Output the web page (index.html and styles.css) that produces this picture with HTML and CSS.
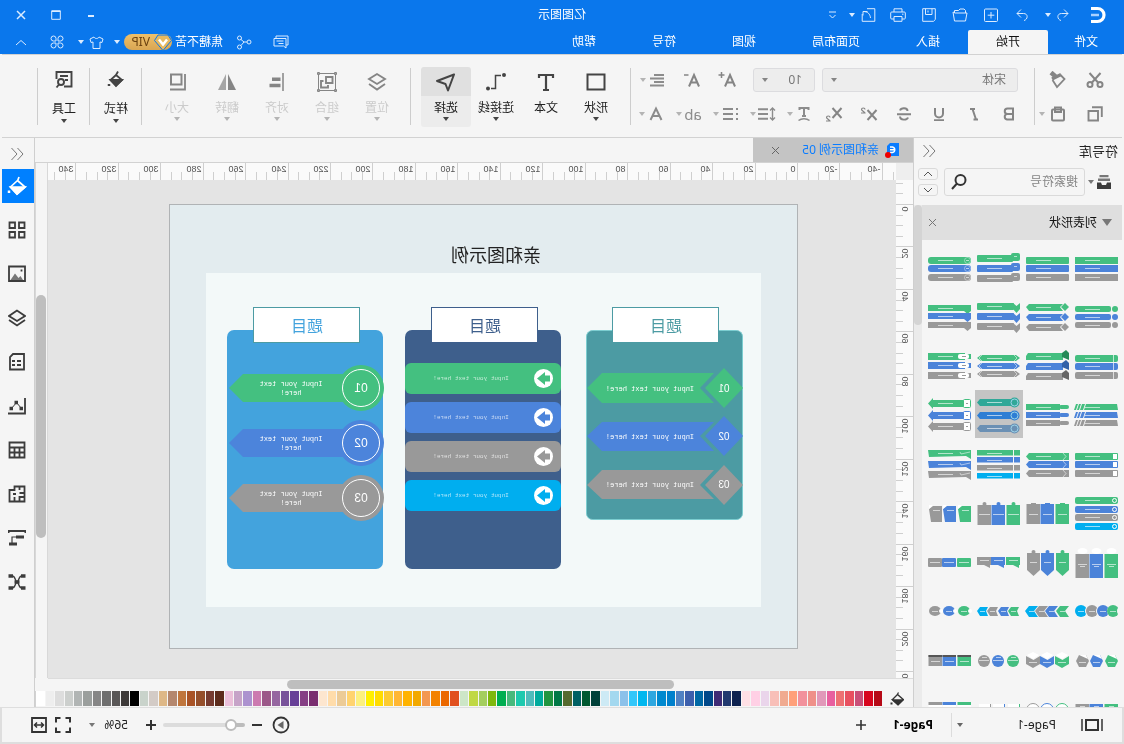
FILE: index.html
```html
<!DOCTYPE html>
<html lang="zh-CN">
<head>
<meta charset="utf-8">
<title>亿图图示</title>
<link rel="stylesheet" href="styles.css">
</head>
<body>
<div class="window">
  <header class="titlebar">
    <div class="title-row">
      <div class="quick">
        <svg class="logo" width="18" height="18" viewBox="0 0 18 18"><path d="M16 2.500H9.500a6.500 6.500 0 0 0 0 13H16" fill="none" stroke="#fff" stroke-width="3.200"/><path d="M8 9h8" stroke="#a9d0ff" stroke-width="2.500"/></svg>
        <button class="ic undo" aria-label="撤销"><svg width="14" height="14" viewBox="0 0 14 14"><path d="M6 1.500L2 5.500l4 4M2 5.500h6.500c5 0 4.500 6 .5 7"/></svg></button>
        <button class="ic drop" aria-label="撤销列表"><i class="caret"></i></button>
        <button class="ic q redo" aria-label="重做"><svg width="14" height="14" viewBox="0 0 14 14"><path d="M8 1.500l4 4-4 4M12 5.500H5.500c-5 0-4.500 6-.5 7"/></svg></button>
        <button class="ic q" aria-label="新建"><svg width="14" height="14" viewBox="0 0 14 14"><rect x=".5" y="1" width="13" height="12.500" rx="1"/><path d="M7 4v6.500M3.700 7.200h6.600"/></svg></button>
        <button class="ic q" aria-label="打开"><svg width="16" height="14" viewBox="0 0 16 14"><path d="M2.500 5V2.500L4 1h4l1.500 1.500h4V5M1 5h12l2-1-1.500 9H2.500z"/></svg></button>
        <button class="ic q" aria-label="保存"><svg width="14" height="14" viewBox="0 0 14 14"><path d="M.7.700h12.600v12.600H2.500L.7 11.500z"/><path d="M4 .700v5.800h6.500V.700M8 2.500v2"/></svg></button>
        <button class="ic q" aria-label="打印"><svg width="16" height="14" viewBox="0 0 16 14"><path d="M4 4V.800h8V4M4 11H1.500A1 1 0 0 1 .7 10V5a1 1 0 0 1 1-1h12.600a1 1 0 0 1 1 1v5a1 1 0 0 1-1 1H12M4 8.500h8v4.800H4zM2.500 6.200h1.500"/></svg></button>
        <button class="ic export" aria-label="导出"><svg width="15" height="14" viewBox="0 0 15 14"><path d="M9 .700H1.200v12.600h12.600V6M5.500 10C6 6 8 3.500 13 3.500M8.500 3.500h4.500v4"/></svg></button>
        <button class="ic drop" aria-label="导出列表"><i class="caret"></i></button>
        <button class="ic custom" aria-label="自定义"><svg width="10" height="10" viewBox="0 0 10 10"><path d="M1 2h7M1.500 5l3 3 3-3"/></svg></button>
      </div>
      <h1 class="app-title">亿图图示</h1>
      <div class="win-buttons">
        <button class="ic" aria-label="最小化"><svg width="10" height="10" viewBox="0 0 10 10"><path d="M2 6h6" stroke-width="2"/></svg></button>
        <button class="ic" aria-label="最大化"><svg width="10" height="10" viewBox="0 0 10 10"><path d="M.7.700h8.600v8.600H.7zM.7 1.500h8.600"/></svg></button>
        <button class="ic" aria-label="关闭"><svg width="10" height="10" viewBox="0 0 10 10"><path d="M1 1l8 8M9 1L1 9" stroke-width="1.500"/></svg></button>
      </div>
    </div>
    <div class="tab-row">
      <nav class="tabs">
        <button class="tab file">文件</button><button class="tab active">开始</button><button class="tab">插入</button><button class="tab">页面布局</button><button class="tab">视图</button><button class="tab">符号</button><button class="tab">帮助</button>
      </nav>
      <div class="account">
        <button class="ic chat" aria-label="消息"><svg width="16" height="14" viewBox="0 0 16 14"><path d="M1 1h12v2M1 1v9M3 3.500h12V11H5.500L3 13zM5.500 6h7M5.500 8.500h5M1 10h2"/></svg></button>
        <button class="ic share" aria-label="分享"><svg width="16" height="15" viewBox="0 0 16 15"><circle cx="3" cy="7" r="2"/><circle cx="12.500" cy="3" r="2"/><circle cx="12.500" cy="12" r="2"/><path d="M5 7h3l3-2.500M8 7l3 3.500"/></svg></button>
        <span class="user">焦糖不苦</span>
        <span class="vip"><svg width="18" height="17" viewBox="0 0 18 17"><path d="M4 1h10l3.500 5.500L9 16.500.5 6.500z" fill="#e8b95e" stroke="#0b77ea" stroke-width="1"/><path d="M5 5.500l4 5 4-5" fill="none" stroke="#fff" stroke-width="2.500"/></svg><b>VIP</b></span>
        <button class="ic drop vip-drop" aria-label="账户"><i class="caret"></i></button>
        <button class="ic shirt" aria-label="主题"><svg width="15" height="13" viewBox="0 0 15 13"><path d="M5 1L1 3l1 3.500 2-.5v6.500h7V6l2 .5L14 3l-4-2c-1 2-4 2-5 0z"/></svg></button>
        <button class="ic drop" aria-label="主题列表"><i class="caret"></i></button>
        <button class="ic apps" aria-label="应用"><svg width="14" height="14" viewBox="0 0 14 14"><path d="M6 6H3.300A2.500 2.500 0 1 1 6 3.300zM8 6h2.700A2.500 2.500 0 1 0 8 3.300zM6 8H3.300A2.500 2.500 0 1 0 6 10.700zM8 8h2.700A2.500 2.500 0 1 1 8 10.700z"/></svg></button>
        <button class="ic fold" aria-label="收起"><svg width="12" height="7" viewBox="0 0 12 7"><path d="M1 6l5-4.500L11 6"/></svg></button>
      </div>
    </div>
  </header>

  <section class="ribbon">
    <div class="clip">
      <button class="ic" aria-label="剪切"><svg width="18" height="18" viewBox="0 0 18 18" stroke-width="2"><circle cx="4" cy="13.500" r="2.500"/><circle cx="14" cy="13.500" r="2.500"/><path d="M3.500 2l8.500 9.500M14.500 2L6 11.500"/></svg></button>
      <button class="ic" aria-label="格式刷"><svg width="18" height="18" viewBox="0 0 18 18" stroke-width="1.800"><path d="M5.500 4L1.500 8l7.500 8 4.500-7"/><path d="M5 3.500l9 4.500" stroke-width="3.200"/><path d="M10.500 5.500l4.500-4" stroke-width="4.500"/></svg></button>
      <button class="ic" aria-label="复制"><svg width="16" height="16" viewBox="0 0 16 16" stroke-width="1.900"><path d="M5 5h9.500v9.500H5z"/><path d="M1.200 11V1.200H11" transform="translate(0 0)"/></svg></button>
      <button class="ic paste" aria-label="粘贴"><svg width="16" height="16" viewBox="0 0 16 16" stroke-width="2"><rect x="2" y="3.500" width="12" height="11" rx="1"/><rect x="5" y="1.500" width="6" height="4.500"/></svg><i class="caret pale"></i></button>
    </div>
    <span class="sep"></span>
    <div class="font-tools">
      <div class="tool-row first">
        <label class="pick"><select class="family" aria-label="字体"><option>宋体</option></select><i class="caret"></i></label>
        <label class="pick"><select class="size" aria-label="字号"><option>10</option></select><i class="caret"></i></label>
        <button class="ic plain grow" aria-label="增大字号"><svg width="18" height="18" viewBox="0 0 18 18" stroke-width="2"><path d="M1 15.500L6 4l5 11.500M3 11.500h6"/><path d="M14.500 1v6M11.500 4h6" stroke-width="1.500"/></svg></button>
        <button class="ic plain" aria-label="减小字号"><svg width="18" height="18" viewBox="0 0 18 18" stroke-width="2"><path d="M2 15.500L7 4l5 11.500M4 11.500h6"/><path d="M12.500 4H17" stroke-width="1.500"/></svg></button>
        <button class="ic combo align" aria-label="对齐方式"><svg width="16" height="14" viewBox="0 0 16 14" stroke-width="2"><path d="M1 2h10M1 5.500h14M1 9h10M1 12.500h14"/></svg><i class="caret pale"></i></button>
      </div>
      <div class="tool-row">
        <button class="ic plain" aria-label="加粗"><svg width="14" height="14" viewBox="0 0 14 14" stroke-width="2"><path d="M3 1.500h5.500a2.700 2.700 0 0 1 0 5.500H3zM3 7h6a2.800 2.800 0 0 1 0 5.500H3z"/></svg></button>
        <button class="ic plain" aria-label="斜体"><svg width="14" height="14" viewBox="0 0 14 14" stroke-width="2"><path d="M6 2h5M3 12.500h4.500M8.500 2L5 12.500"/></svg></button>
        <button class="ic plain" aria-label="下划线"><svg width="14" height="14" viewBox="0 0 14 14" stroke-width="2"><path d="M3 1v5.500a4 4 0 0 0 8 0V1M2 13.200h10"/></svg></button>
        <button class="ic plain" aria-label="删除线"><svg width="16" height="14" viewBox="0 0 16 14" stroke-width="1.900"><path d="M12 3.500C11 .5 4.500.500 4.500 4M4 10.500c1 3 8 3 8-1M1 7.200h14"/></svg></button>
        <button class="ic plain" aria-label="上标"><svg width="18" height="16" viewBox="0 0 18 16" stroke-width="2"><path d="M1.500 4l9 10M10.500 4l-9 10"/><path d="M13 3.500c0-2 3.500-2 3.500 0 0 1-3.500 3-3.500 3.500h4" stroke-width="1.200"/></svg></button>
        <button class="ic plain" aria-label="下标"><svg width="18" height="16" viewBox="0 0 18 16" stroke-width="2"><path d="M1.500 2l9 10M10.500 2l-9 10"/><path d="M13 11.500c0-2 3.500-2 3.500 0 0 1-3.500 3-3.500 3.500h4" stroke-width="1.200"/></svg></button>
        <button class="ic combo" aria-label="文字效果"><svg width="16" height="16" viewBox="0 0 16 16" stroke-width="2"><path d="M3.500 4V2h9v2M8 2v8M6 10h4"/><path d="M2.500 14.500c3-2.500 8-2.500 11 0" stroke-width="1.500"/></svg><i class="caret pale"></i></button>
        <button class="ic combo" aria-label="行距"><svg width="18" height="16" viewBox="0 0 18 16"><path d="M3.500 2v12M1 4.500L3.500 2 6 4.500M1 11.500L3.500 14 6 11.500" stroke-width="1.400"/><path d="M8 3.200h10M8 8h10M8 12.800h10" stroke-width="2"/></svg><i class="caret pale"></i></button>
        <button class="ic combo" aria-label="项目符号"><svg width="16" height="14" viewBox="0 0 16 14" stroke-width="2"><path d="M0 2h2M0 7h2M0 12h2M5 2h10M5 7h10M5 12h10"/></svg><i class="caret pale"></i></button>
        <button class="ic combo" aria-label="突出显示"><span class="ab">ab</span><i class="caret pale"></i></button>
        <button class="ic combo" aria-label="字体颜色"><svg width="16" height="16" viewBox="0 0 16 16" stroke-width="2"><path d="M2.500 14L8 2.500 13.500 14M4.500 10h7"/></svg><i class="caret pale"></i></button>
      </div>
    </div>
    <span class="sep"></span>
    <div class="bigs draw">
      <button class="big"><svg width="20" height="20" viewBox="0 0 20 20" stroke-width="2"><path d="M1.500 2.500h17v15h-17z"/></svg><span>形状</span><i class="caret"></i></button>
      <button class="big"><svg width="20" height="20" viewBox="0 0 20 20" stroke-width="2.200"><path d="M3 6V3h14v3M10 3v15M7 18h6"/></svg><span>文本</span></button>
      <button class="big"><svg width="20" height="20" viewBox="0 0 20 20" stroke-width="2"><path d="M5 3.500h5.500v13H15" stroke-width="1.500"/><circle cx="2" cy="3" r="1"/><circle cx="18" cy="16.500" r="1"/></svg><span>连接线</span><i class="caret"></i></button>
      <button class="big on"><svg width="20" height="20" viewBox="0 0 20 20" stroke-width="2"><path d="M2 2.500l17 6.500-8.500 3L8 18.500z" stroke-linejoin="round"/></svg><span>选择</span><i class="caret"></i></button>
    </div>
    <span class="sep"></span>
    <div class="bigs arrange">
      <button class="big off"><svg width="20" height="20" viewBox="0 0 20 20" stroke-width="1.900"><path d="M10 2l8 5-8 5-8-5zM2 12l8 5.500 8-5.500"/></svg><span>位置</span><i class="caret pale"></i></button>
      <button class="big off"><svg width="20" height="20" viewBox="0 0 20 20" stroke-width="1.900"><path d="M1.500 1.500h17v17h-17z" stroke-width="1"/><path d="M4.500 5h6.500v6H4.500zM13.500 9H16v6.500H9V13"/><path d="M.5.500h2v2h-2zM17.500.500h2v2h-2zM.5 17.500h2v2h-2zM17.500 17.500h2v2h-2z" stroke-width="1"/></svg><span>组合</span><i class="caret pale"></i></button>
      <button class="big off"><svg width="20" height="20" viewBox="0 0 20 20"><path d="M4 1v18" stroke-width="1.500"/><path d="M6.500 7.200H15M6.500 13.500h11" stroke-width="3.600"/></svg><span>对齐</span><i class="caret pale"></i></button>
      <button class="big off"><svg width="20" height="20" viewBox="0 0 20 20"><path d="M9 2v16H1z" fill="#858585" stroke="none"/><path d="M11 2v16h8z" fill="#a5a5a5" stroke="none"/></svg><span>翻转</span><i class="caret pale"></i></button>
      <button class="big off"><svg width="20" height="20" viewBox="0 0 20 20" stroke-width="2"><path d="M5.500 2.500h10.500v10H5.500z"/><path d="M2 2v15.500h15" stroke-width="1.800"/></svg><span>大小</span><i class="caret pale"></i></button>
    </div>
    <span class="sep"></span>
    <div class="bigs single">
      <button class="big"><svg width="20" height="20" viewBox="0 0 20 20" stroke-width="1.800"><path d="M8 1.500l2 3.500M10 5l5.500 5L10 15.500 4 10z"/><path d="M4 10h11.500L10 16z" fill="currentColor"/><path d="M17 14v2" stroke-width="2.500"/></svg><span>样式</span><i class="caret"></i></button>
    </div>
    <span class="sep"></span>
    <div class="bigs single">
      <button class="big"><svg width="20" height="20" viewBox="0 0 20 20" stroke-width="1.900"><path d="M10 16.500H2.500V2h15v7M6 6h8M6 10h3"/><circle cx="13" cy="12" r="3"/><path d="M15 14.500l2.500 3"/></svg><span>工具</span><i class="caret"></i></button>
    </div>
    <span class="sep"></span>
  </section>

  <main class="workspace">
    <aside class="library">
      <div class="lib-head"><h2>符号库</h2><button class="ic" aria-label="收起符号库"><svg width="14" height="14" viewBox="0 0 14 14"><path d="M6.500 1L1 7l5.500 6M12.500 1L7 7l5.500 6"/></svg></button></div>
      <div class="lib-search">
        <button class="ic lib-menu" aria-label="库"><svg width="14" height="14" viewBox="0 0 14 14"><path d="M2.500 0h9v2.200h-9zM1 3.500h12v2.500H1z" fill="#777" stroke="none"/><path d="M0 7.500h4l1 2.500h4l1-2.500h4V14H0z" fill="#3c3c3c" stroke="none"/></svg><i class="caret"></i></button>
        <div class="search-box"><input type="search" placeholder="搜索符号" aria-label="搜索符号"><button class="ic" aria-label="搜索"><svg width="16" height="16" viewBox="0 0 16 16" stroke-width="2"><circle cx="6.500" cy="6" r="5"/><path d="M10 9.500l5 5.500"/></svg></button></div>
        <div class="steps"><button aria-label="上一个"><svg width="10" height="6" viewBox="0 0 10 6"><path d="M1 5l4-4 4 4"/></svg></button><button aria-label="下一个"><svg width="10" height="6" viewBox="0 0 10 6"><path d="M1 1l4 4 4-4"/></svg></button></div>
      </div>
      <div class="lib-body">
        <div class="lib-list">
          <div class="section-head"><i class="tri"></i><h3>列表形状</h3><button class="ic" aria-label="关闭"><svg width="9" height="9" viewBox="0 0 9 9"><path d="M1 1l7 7M8 1L1 8"/></svg></button></div>
          <div class="thumbs" id="thumbs"></div>
        </div>
        <div class="lib-scroll"><i></i></div>
      </div>
    </aside>

    <section class="editor">
      <div class="doc-tabs"><div class="doc-tab"><svg width="16" height="16" viewBox="0 0 16 16"><path d="M2 1h9l3 3v10H2z" fill="#0a7cff"/><path d="M11 5H8.500a2.800 2.800 0 0 0 0 5.500H11M7 7.800h4" fill="none" stroke="#fff" stroke-width="1.400"/><circle cx="13" cy="13" r="3" fill="#f00000"/></svg><span>亲和图示例 05</span><button class="ic" aria-label="关闭文档"><svg width="9" height="9" viewBox="0 0 9 9"><path d="M1 1l7 7M8 1L1 8"/></svg></button></div></div>
      <div class="stage">
        <div class="corner"></div>
        <svg class="hruler" id="hruler"></svg>
        <div class="vscroll"><i></i></div>
        <svg class="vruler" id="vruler"></svg>
        <div class="canvas">
          <svg class="page" width="629" height="445" viewBox="0 0 629 445">
            <rect x=".5" y=".5" width="628" height="444" fill="#e3ecef" stroke="#b0b3b5"/>
            <rect x="37" y="69" width="555" height="334" fill="#f3f9f9"/>
            <text x="302" y="58" class="doc-title">亲和图示例</text>

            <rect x="55.500" y="126.500" width="156" height="189" rx="6" fill="#4c9ba3" stroke="#7ccdd0"/>
            <rect x="79.500" y="103.500" width="106" height="35" fill="#fff" stroke="#4c9ba3"/>
            <text x="132" y="128" class="card-title" fill="#4c9ba3">题目</text>
            <g fill="#44c080"><path d="M55 184l19-20 19 20-19 20z"/><path d="M84 169h112l15 15-15 15H84l14-15z"/></g>
            <g fill="#4c84db"><path d="M55 232l19-20 19 20-19 20z"/><path d="M84 218h112l15 14-15 15H84l14-15z"/></g>
            <g fill="#999"><path d="M55 281l19-20 19 20-19 20z"/><path d="M84 266h112l15 15-15 14H84l14-14z"/></g>
            <g class="num small"><text x="74" y="188">01</text><text x="74" y="236">02</text><text x="74" y="284">03</text></g>
            <g class="note"><text x="148" y="187">Input your text here!</text><text x="148" y="235">Input your text here!</text><text x="148" y="283">Input your text here!</text></g>

            <rect x="237" y="126" width="156" height="239" rx="7" fill="#3e5f8c"/>
            <rect x="260.500" y="103.500" width="106" height="35" fill="#fff" stroke="#3e5f8c"/>
            <text x="313" y="128" class="card-title" fill="#3e5f8c">题目</text>
            <rect x="237" y="159" width="156" height="31" rx="6" fill="#44c080"/>
            <rect x="237" y="198" width="156" height="31" rx="6" fill="#4c84db"/>
            <rect x="237" y="237" width="156" height="31" rx="6" fill="#999"/>
            <rect x="237" y="276" width="156" height="31" rx="6" fill="#00aeef"/>
            <g fill="#fff"><circle cx="254.500" cy="174.500" r="9.500"/><circle cx="254.500" cy="213.500" r="9.500"/><circle cx="254.500" cy="252.500" r="9.500"/><circle cx="254.500" cy="291.500" r="9.500"/></g>
            <path d="M248 171.500h5v-3.500l8 6.500-8 6.500v-3.500h-5z" fill="#44c080"/>
            <path d="M248 210.500h5v-3.500l8 6.500-8 6.500v-3.500h-5z" fill="#4c84db"/>
            <path d="M248 249.500h5v-3.500l8 6.500-8 6.500v-3.500h-5z" fill="#999"/>
            <path d="M248 288.500h5v-3.500l8 6.500-8 6.500v-3.500h-5z" fill="#00aeef"/>
            <g class="note faint"><text x="327" y="176">Input your text here!</text><text x="327" y="215">Input your text here!</text><text x="327" y="254">Input your text here!</text><text x="327" y="293">Input your text here!</text></g>

            <rect x="415" y="126" width="156" height="239" rx="7" fill="#43a3dd"/>
            <rect x="438.500" y="103.500" width="106" height="35" fill="#fff" stroke="#4c9ba3"/>
            <text x="491" y="128" class="card-title" fill="#43a3dd">题目</text>
            <g fill="#44c080"><circle cx="437" cy="184" r="23"/><path d="M450 170h105l14 14-14 14H450z"/></g>
            <g fill="#4c84db"><circle cx="437" cy="239" r="23"/><path d="M450 225h105l14 14-14 14H450z"/></g>
            <g fill="#999"><circle cx="437" cy="294" r="23"/><path d="M450 280h105l14 14-14 14H450z"/></g>
            <g fill="none" stroke="#fff" stroke-width="1"><circle cx="437" cy="184" r="18.500"/><circle cx="437" cy="239" r="18.500"/><circle cx="437" cy="294" r="18.500"/></g>
            <g class="num"><text x="437" y="188">01</text><text x="437" y="243">02</text><text x="437" y="298">03</text></g>
            <g class="note"><text x="507" y="182">Input your text</text><text x="507" y="191">here!</text><text x="507" y="237">Input your text</text><text x="507" y="246">here!</text><text x="507" y="292">Input your text</text><text x="507" y="301">here!</text></g>
          </svg>
        </div>
        <div class="hscroll"><i></i></div>
      </div>
      <div class="palette">
        <button class="ic" aria-label="填充颜色"><svg width="14" height="14" viewBox="0 0 14 14" stroke-width="1.300"><path d="M5.500.500L7 3M6.500 2.500l5 5L6 12.500.8 7.500z"/><path d="M1 8h10.500L6 12.800z" fill="currentColor"/><path d="M12.500 10.500v2" stroke-width="2"/></svg></button>
        <div class="swatches" id="swatches"></div>
      </div>
    </section>

    <aside class="rail">
      <button class="ic top" aria-label="展开"><svg width="14" height="14" viewBox="0 0 14 14"><path d="M6.500 1L1 7l5.500 6M12.500 1L7 7l5.500 6"/></svg></button>
      <button class="ic on" aria-label="填充"><svg width="20" height="20" viewBox="0 0 20 20" stroke-width="1.700"><path d="M8 1l1.500 4M9.500 4.500l7 6.500-6.500 7L2 11z"/><path d="M2 11h14.500L10 18z" fill="#fff"/><path d="M18 14.500v2.500" stroke-width="2.500"/></svg></button>
      <button class="ic" aria-label="符号"><svg width="18" height="18" viewBox="0 0 18 18"><path d="M1.500 1.500h5.500v5.500H1.500zM11 1.500h5.500v5.500H11zM1.500 11h5.500v5.500H1.500zM11 11h5.500v5.500H11z"/></svg></button>
      <button class="ic" aria-label="图片"><svg width="18" height="18" viewBox="0 0 18 18"><path d="M1 1.500h16v14.500H1z"/><path d="M3 15l2.500-4 2 2L11 8.500l4.500 6.500z" fill="#777" stroke="none"/><path d="M4.500 4.500v2"/></svg></button>
      <button class="ic" aria-label="图层"><svg width="18" height="18" viewBox="0 0 18 18"><path d="M9 1.500l8 5.500-8 5-8-5zM1 11l8 5.500 8-5.500"/></svg></button>
      <button class="ic" aria-label="页面"><svg width="18" height="18" viewBox="0 0 18 18"><path d="M2 1h11l3 3v12.500H2zM5 8h4M11 8h3M5 12h4M11 12h3"/></svg></button>
      <button class="ic" aria-label="图表"><svg width="18" height="18" viewBox="0 0 18 18"><path d="M1 1v15.500h17"/><path d="M4.500 11.500l5-6 5 6" stroke-width="1"/><path d="M3 11.500h3.500M13 11.500h3.500M8 5.500h3.500" stroke-width="3.500"/></svg></button>
      <button class="ic" aria-label="表格"><svg width="18" height="18" viewBox="0 0 18 18"><path d="M1.500 1.500h15v15h-15zM1.500 6.500h15M1.500 11.500h15M6.500 6.500v10M11.500 6.500v10"/></svg></button>
      <button class="ic" aria-label="平面图"><svg width="18" height="18" viewBox="0 0 18 18"><path d="M1.500 1.500H11.500V5h5v11.500h-15zM1.500 8h5M6.500 1.500V5M1.500 12h5v4.500M11.500 16.500V12M10 9h3"/></svg></button>
      <button class="ic" aria-label="时间线"><svg width="18" height="18" viewBox="0 0 18 18"><path d="M.5 4V2h17v2" stroke-width="2"/><path d="M2 8h8M9 15h8" stroke-width="3"/><path d="M10 8h4v7" stroke-width="1.200"/></svg></button>
      <button class="ic" aria-label="思维导图"><svg width="18" height="18" viewBox="0 0 18 18"><path d="M.5 3h4.500M13 3h4.500M.5 15h4.500M13 15h4.500M6.500 9h5" stroke-width="3.500"/><path d="M4 3c4 0 3 6 5 6s1-6 5-6M4 15c4 0 3-6 5-6s1 6 5 6" stroke-width="1.300"/></svg></button>
    </aside>
  </main>

  <footer class="status">
    <button class="ic view" aria-label="页面列表"><svg width="22" height="12" viewBox="0 0 22 12"><path d="M5 1h12v10H5z" stroke-width="2"/><path d="M1 0v12M21 0v12" stroke-width="1.500"/></svg></button>
    <label class="page-pick"><select aria-label="页面"><option>Page-1</option></select><i class="caret"></i></label>
    <button class="page-name">Page-1</button>
    <button class="ic add" aria-label="新增页面"><svg width="10" height="10" viewBox="0 0 10 10" stroke-width="1.600"><path d="M5 0v10M0 5h10"/></svg></button>
    <div class="zoomer">
      <button class="ic" aria-label="演示"><svg width="18" height="18" viewBox="0 0 18 18"><circle cx="9" cy="9" r="7.500" stroke-width="1.800"/><path d="M6.500 5l6 4-6 4z" fill="#666" stroke="none"/></svg></button>
      <button class="ic minus" aria-label="缩小"><svg width="10" height="10" viewBox="0 0 10 10" stroke-width="2"><path d="M0 5h10"/></svg></button>
      <input class="slider" type="range" min="0" max="100" value="11" aria-label="缩放">
      <button class="ic plus" aria-label="放大"><svg width="10" height="10" viewBox="0 0 10 10" stroke-width="2"><path d="M5 0v10M0 5h10"/></svg></button>
      <label class="percent"><select aria-label="缩放比例"><option>56%</option></select><i class="caret"></i></label>
      <button class="ic full" aria-label="全屏"><svg width="16" height="16" viewBox="0 0 16 16" stroke-width="2"><path d="M1 5.500V1h4.500M10.500 1H15v4.500M15 10.500V15h-4.500M5.500 15H1v-4.500"/></svg></button>
      <button class="ic" aria-label="适应宽度"><svg width="16" height="16" viewBox="0 0 16 16" stroke-width="1.800"><path d="M1 1h14v14H1z"/><path d="M3.500 8h9M6 5.500L3.500 8 6 10.500M10 5.500L12.500 8 10 10.500" stroke-width="1.500"/></svg></button>
    </div>
  </footer>
</div>
<script src="app.js"></script>
</body>
</html>
```

FILE: styles.css
```css
* { box-sizing: border-box; }
body { margin: 0; font: 12px/16px "Noto Sans", "Noto Sans CJK SC", sans-serif; color: #222; background: #f5f5f5; }
button, select, input { font: inherit; color: inherit; margin: 0; padding: 0; border: 0; background: none; }
button { display: flex; align-items: center; justify-content: center; }
h1, h2, h3 { margin: 0; font-size: 12px; font-weight: 400; }
svg { display: block; flex: none; }
button svg { fill: none; stroke: currentColor; }

/* the whole window is shown as a mirror image */
.window { display: flex; flex-direction: column; height: 100vh; overflow: hidden; transform: scaleX(-1); }

.caret { flex: none; width: 0; height: 0; border: 3px solid transparent; border-top: 4px solid currentColor; border-bottom: 0; }
.caret.pale { border-top-color: #b4b4b4; }

.titlebar { background: #0a77ec; color: #fff; }
.titlebar .ic { color: #dcecff; height: 24px; }
.title-row { display: grid; grid-template-columns: 1fr auto 1fr; align-items: center; height: 30px; }
.quick { display: flex; align-items: center; padding-left: 17px; }
.undo { width: 22px; margin-left: 15px; }
.drop { width: 8px; }
.q { width: 31px; }
.redo { margin-left: 6px; }
.export { width: 22px; margin: 0 2px 0 3px; }
.custom { width: 20px; margin-left: 6px; }
.win-buttons { display: flex; justify-content: flex-end; padding-right: 4px; }
.win-buttons .ic { width: 35px; }
.tab-row { display: flex; justify-content: space-between; align-items: center; height: 24px; }
.tabs { display: flex; height: 24px; }
.tab { padding: 0 28px; color: #fff; }
.tab.file { padding: 0 26px; }
.tab.active { background: #f5f5f5; color: #111; border-radius: 2px 2px 0 0; }
.account { display: flex; align-items: center; padding: 0 12px 0 0; }
.chat, .share, .shirt, .apps, .fold { width: 18px; }
.share { margin: 0 12px 0 19px; }
.vip { display: flex; align-items: center; width: 48px; height: 16px; margin-left: 3px; border-radius: 8px; background: linear-gradient(#efc06a, #d9a653); }
.vip b { padding-left: 4px; font-weight: 400; color: #6b4210; }
.vip-drop { margin: 0 7px 0 3px; }
.shirt { margin-right: 3px; }
.apps { margin: 0 18px 0 11px; }

.ribbon { display: flex; flex: none; height: 84px; margin: 0 2px; padding-top: 12px; border: solid #d2d2d2; border-width: 1px 0; color: #858585; }
.titlebar, .workspace, .status { flex: none; }
.sep { flex: none; width: 1px; height: 57px; margin-top: 1px; background: #cdcdcd; }
.clip { display: grid; grid-template-columns: 38px 38px; grid-template-rows: 26px 26px; row-gap: 8px; width: 87px; padding-left: 8px; }
.paste { justify-content: flex-start; gap: 5px; padding-left: 10px; }
.font-tools { display: grid; align-content: start; row-gap: 8px; width: 403px; padding-left: 7px; }
.tool-row { display: flex; height: 26px; align-items: center; }
.first { padding-left: 9px; }
.pick { position: relative; display: flex; align-items: center; margin-right: 7px; }
.pick select { appearance: none; height: 24px; padding-left: 11px; border: 1px solid #dcdcdf; border-radius: 3px; background: #ededed; color: #777; }
.pick .caret { position: absolute; right: 9px; }
.pick .family { width: 196px; }
.pick .size { width: 62px; padding-left: 12px; }
.grow { margin-left: 1px; }
.plain { width: 35px; height: 26px; }
.combo { width: 37px; height: 26px; justify-content: flex-start; gap: 2px; padding-left: 4px; color: #8c8c8c; }
.combo svg, .ab { width: 18px; }
.combo.align { margin-left: 5px; }
.ab { font-size: 15px; }
.bigs { display: flex; color: #444; }
.draw { padding: 0 10px 0 9px; }
.arrange { padding: 0 10px 0 8px; }
.single { width: 51px; }
.big { flex-direction: column; justify-content: flex-start; width: 50px; height: 60px; padding-top: 5px; border-radius: 3px; }
.big span { margin: 8px 0 1px; color: #222; }
.big.off { color: #858585; }
.big.off span { color: #cbcbcb; }
.big.on { background: linear-gradient(#e0e0e0 29px, #ececec 29px); }
.single .big { padding-top: 3px; }
.single .big span { margin: 11px 0 2px; }

.workspace { display: grid; flex: 1; grid-template-columns: 209px minmax(0, 1fr) 33px; min-height: 0; margin: 0 2px; }
.library { display: flex; flex-direction: column; min-width: 0; min-height: 0; border-right: 1px solid #cfcfcf; }
.lib-head { display: flex; justify-content: space-between; align-items: center; height: 26px; padding: 0 8px 0 4px; color: #777; }
.lib-head h2 { font-size: 13px; color: #222; }
.lib-search { display: flex; height: 41px; padding: 4px 4px 9px 12px; }
.lib-menu { width: 21px; gap: 3px; color: #777; }
.search-box { display: flex; flex: 1; min-width: 0; margin: 0 6px 0 4px; padding: 0 6px; border: 1px solid #dadada; border-radius: 3px; color: #333; }
.search-box input { flex: 1; width: 0; min-width: 0; outline: 0; }
.search-box input::placeholder { color: #858585; }
.steps { display: grid; gap: 4px; width: 20px; }
.steps button { border: 1px solid #dadada; border-radius: 3px; color: #555; }
.lib-body { display: flex; flex: 1; min-height: 0; }
.lib-list { flex: 1; overflow: hidden; }
.section-head { display: flex; align-items: center; height: 35px; padding: 0 6px 0 10px; background: #dfdfdf; color: #777; }
.section-head h3 { flex: 1; padding-left: 5px; color: #111; }
.tri { border: 5px solid transparent; border-top: 7px solid #777; border-bottom: 0; }
.thumbs { display: grid; grid-template-columns: repeat(4, 48px); gap: 1px; padding: 3px 0 0 1px; }
.thumb.on { background: #c4c4c4; }
.lib-scroll { width: 8px; background: #ebebeb; }
.lib-scroll i { display: block; height: 120px; border-radius: 4px; background: #d4d4d4; }

.editor { display: flex; flex-direction: column; min-width: 0; min-height: 0; }
.doc-tabs { display: flex; height: 25px; border-bottom: 1px solid #d2d2d2; }
.doc-tab { display: flex; align-items: center; width: 160px; padding: 0 18px 0 12px; background: #c4c4c4; color: #0a7cff; }
.doc-tab span { flex: 1; padding-left: 6px; }
.doc-tab .ic { color: #666; }
.stage { display: grid; flex: 1; min-height: 0; grid-template: 17px minmax(0, 1fr) 13px / 17px minmax(0, 1fr) 13px; }
.corner { background: #eee; }
.hruler, .vruler { width: 100%; height: 100%; overflow: hidden; background: #fafafa; }
.hruler text, .vruler text { font: 9px "Liberation Sans", sans-serif; fill: #555; }
.hruler path, .vruler path { fill: none; stroke: #cfcfcf; }
.vscroll { grid-column: 3; grid-row: 1 / 3; padding: 132px 1px 0; border: solid #d8d8d8; border-width: 0 1px; }
.vscroll i { display: block; width: 10px; height: 243px; border-radius: 5px; background: #bebebe; }
.vruler { grid-row: 2; }
.canvas { overflow: hidden; padding: 24px 0 0 98px; background: #e4e4e4; }
.hscroll { grid-column: 1 / 3; padding: 1px 0 0 239px; border-top: 1px solid #dcdcdc; }
.hscroll i { display: block; width: 387px; height: 9px; border-radius: 5px; background: #bebebe; }
.doc-title { font: 18px "Noto Sans CJK SC", sans-serif; text-anchor: middle; fill: #222; }
.card-title { font: 16px "Noto Sans CJK SC", sans-serif; text-anchor: middle; }
.num { font: 12px "Liberation Sans", sans-serif; text-anchor: middle; fill: #fff; }
.num.small { font-size: 10px; }
.note { font: 7px "Liberation Mono", monospace; text-anchor: middle; fill: #fff; }
.note.faint { font-size: 6px; fill-opacity: .7; }
.palette { display: flex; height: 16px; border-right: 1px solid #d2d2d2; }
.palette .ic { width: 31px; color: #333; }
.swatches { display: flex; flex: 1; gap: 1px; padding-bottom: 1px; }
.swatches i { flex: 1; }

.rail { display: flex; flex-direction: column; border-left: 1px solid #cfcfcf; color: #3c3c3c; }
.rail .ic { height: 34px; margin-bottom: 10px; padding-left: 2px; stroke-width: 1.8px; }
.rail .top { height: 31px; margin: 0; color: #777; stroke-width: 1px; }
.rail .on { background: #0080ff; color: #fff; }

.status { display: flex; align-items: center; height: 37px; padding: 0 14px; border: 2px solid #dedede; border-top-width: 1px; color: #333; }
.status select { appearance: none; color: #222; }
.view { width: 32px; }
.page-pick { display: flex; align-items: center; justify-content: space-between; height: 24px; width: 113px; margin-left: 12px; padding: 0 5px 0 8px; border-right: 1px solid #dcdcdc; color: #666; }
.page-name { margin-left: 18px; color: #000; font-weight: 700; }
.add { margin-left: 27px; }
.zoomer { display: flex; align-items: center; margin-left: auto; padding-right: 15px; }
.minus { margin: 0 7px 0 10px; }
.slider { appearance: none; width: 82px; height: 4px; border-radius: 2px; background: linear-gradient(90deg, #bcbcbc 14px, #dcdcdc 14px); }
.slider::-webkit-slider-thumb { appearance: none; width: 12px; height: 12px; border: 2px solid #bcbcbc; border-radius: 50%; background: #fff; }
.plus { margin: 0 18px 0 7px; }
.percent { display: flex; align-items: center; gap: 9px; color: #777; }
.full { margin: 0 8px 0 18px; }
```

FILE: app.js
```js
const G = '#44bf80', B = '#4b83d9', Y = '#999', C = '#00aeef', W = '#fff';
const rect = (x, y, w, h, c, r = 0) => `<rect x="${x}" y="${y}" width="${w}" height="${h}" rx="${r}" fill="${c}"/>`;
const poly = (p, c) => `<polygon points="${p}" fill="${c}"/>`;
const circ = (x, y, r, c, s = 'none') => `<circle cx="${x}" cy="${y}" r="${r}" fill="${c}" stroke="${s}"/>`;
const ell = (x, y, a, b, c) => `<ellipse cx="${x}" cy="${y}" rx="${a}" ry="${b}" fill="${c}"/>`;
const dash = (x, y, w) => `<rect x="${x}" y="${y}" width="${w}" height="1" fill="#fff" opacity=".6"/>`;
const rows = (ys, f, cs = [G, B, Y, C]) => ys.map((y, i) => f(y, cs[i]) + dash(21, y + 3, 15)).join('');
const cols = f => [[3, G], [18, B], [32, Y]].map(([x, c]) => f(x, c)).join('');

const shapes = [
  rows([14, 22, 31], (y, c) => rect(3, y, 43, 7, c)),
  rows([14, 22, 31], (y, c) => rect(3, y, 43, 7, c, 1)),
  rows([12, 22, 32], (y, c) => rect(10, y, 36, 7, c, 1) + rect(3, y - 2, 9, 8, c, 2) + dash(6, y + 1, 3)),
  rows([14, 22, 31], (y, c) => rect(3, y, 43, 7, c, 3) + circ(6.5, y + 3.5, 3, c, '#fff6') + dash(5, y + 3, 3)),

  rows([14, 22, 30], (y, c) => circ(6, y + 3, 3, c) + rect(10, y, 36, 6, c, 2)),
  rows([12, 22, 32], (y, c) => poly(`3,${y + 3} 7,${y - 1} 11,${y + 3} 7,${y + 7}`, c) + poly(`9,${y} 43,${y} 46,${y + 3} 43,${y + 7} 9,${y + 7} 12,${y + 3}`, c)),
  rows([11, 21, 31], (y, c) => rect(9, y, 37, 7, c, 1) + poly(`3,${y} 6.500,${y + 3} 10,${y} 10,${y + 6} 6.500,${y + 10} 3,${y + 6}`, c)),
  rows([13, 21, 30], (y, c) => rect(3, y, 43, 6, c) + poly(`3,${y} 10,${y} 10,${y + 6} 6.500,${y + 9} 3,${y + 6}`, c)),

  rows([14, 22, 31], (y, c) => rect(3, y, 43, 7, c, 2) + rect(7, y, 1, 7, '#fffa')),
  rows([12, 22, 32], (y, c) => poly(`9,${y} 44,${y} 46,${y + 3} 46,${y + 7} 9,${y + 7}`, c) + poly(`3,${y} 6,${y - 3} 10,${y} 10,${y + 4} 3,${y + 7}`, { [G]: '#258a58', [B]: '#3261a8', [Y]: '#666' }[c])),
  rows([14, 22, 30], (y, c) => poly(`3,${y + 3} 7,${y} 42,${y} 46,${y + 3} 42,${y + 6} 7,${y + 6}`, c) + `<path d="M9 ${y}l-3 3 3 3M41 ${y}l3 3-3 3" fill="none" stroke="#fff8"/>`),
  rows([12, 21, 31], (y, c) => rect(3, y + 1, 8, 5, c) + rect(9, y, 37, 7, c) + rect(5, y + 1, 11, 5, W, 2) + rect(8, y + 3, 4, 1, '#999')),

  rows([14, 22, 30], (y, c) => poly(`4,${y} 35,${y} 37,${y + 6} 3,${y + 6}`, c) + poly(`36,${y} 39,${y} 41,${y + 6} 38,${y + 6}`, c) + poly(`40,${y} 42,${y} 44,${y + 6} 42,${y + 6}`, c) + poly(`43,${y} 45,${y} 47,${y + 6} 45,${y + 6}`, c)),
  rows([14, 22, 30], (y, c) => rect(12, y, 34, 6, c) + rect(3, y + 1, 10, 4, c, 2)),
  rows([9, 22, 35], (y, c) => poly(`8,${y} 43,${y} 46,${y + 3.5} 43,${y + 7} 8,${y + 7}`, c) + circ(8.5, y + 3.5, 5, c) + circ(8.500, y + 3.5, 3.5, 'none', '#9cd3e8'), ['#30a898', '#2e7ed4', '#6b90b4']),
  rows([10, 22, 33], (y, c) => poly(`10,${y} 41,${y} 41,${y - 2} 46,${y + 3.5} 41,${y + 9} 41,${y + 7} 10,${y + 7}`, c) + `<rect x="3.500" y="${y - .5}" width="7" height="8" rx="1" fill="#fff" stroke="${c}"/>` + rect(6, y + 3, 2, 1, '#999')),

  rows([14, 22, 31], (y, c) => rect(3, y, 43, 7, c, 1) + rect(4, y + 1, 4, 5, W)),
  rows([14, 22, 31], (y, c) => poly(`3,${y} 43,${y} 46,${y + 3.5} 43,${y + 7} 3,${y + 7}`, c) + `<path d="M9 ${y}l-3 3.500 3 3.500" fill="none" stroke="#fff8"/>`),
  rows([11, 18, 26, 34], (y, c) => rect(3, y, 6, 5.5, c) + rect(10, y, 36, 5.5, c)),
  rows([11, 22, 32], (y, c) => poly(`3,${y} 46,${y} 45,${y + 7} 8,${y + 6} 3,${y + 9}`, c) + `<path d="M4 ${y + 2}l9 2 1-2" fill="none" stroke="#fff8"/>`),

  rows([9, 18, 26, 35], (y, c) => rect(3, y, 43, 7, c, 2) + circ(6.5, y + 3.5, 2, 'none', W)),
  cols((x, c) => rect(x, 16, 13.5, 20, c) + rect(x + 4, 15, 5, 2, c) + dash(x + 2, 26, 9)),
  cols((x, c) => rect(x, 17, 13.5, 20, c) + circ(x + 6.5, 16, 2, c) + dash(x + 1, 26, 11)),
  cols((x, c) => poly(`${x},18 ${x + 9},18 ${x + 13},21 ${x + 11},34 ${x},34`, c) + poly(`${x + 9},17 ${x + 13},21 ${x + 13},17`, W) + dash(x + 2, 22, 7)),

  cols((x, c) => rect(x, 17, 13.5, 24, c) + ell(x + 6.5, 14, 5, 3, W) + dash(x + 2, 27, 9) + dash(x + 4, 29, 5)),
  cols((x, c) => poly(`${x},16 ${x + 13},16 ${x + 13},33 ${x + 6.500},39 ${x},33`, c) + circ(x + 6.5, 15, 2, c) + dash(x + 3, 25, 7)),
  cols((x, c) => rect(x, 20, 14, 8, c) + poly(`${x + 1},27 ${x + 1},31 ${x + 7},28`, c) + dash(x + 2, 23, 9)),
  cols((x, c) => rect(x, 21, 14, 9, c, 1) + dash(x + 2, 25, 10)),

  [[40, C], [29, Y], [18, B], [8, G]].map(([x, c]) => circ(x, 25, 6, c) + circ(x - 8, 25, 4, '#f5f5f5') + dash(x - 3, 25, 6)).join(''),
  [[34, C], [24, Y], [14, B], [3, G]].map(([x, c]) => poly(`${x},20 ${x + 9},20 ${x + 13},25 ${x + 9},31 ${x},31 ${x + 4},25`, c) + dash(x + 4, 25, 5)).join(''),
  [[35, C], [25, Y], [14, B], [4, G]].map(([x, c]) => poly(`${x},21 ${x + 8},21 ${x + 11},25 ${x + 8},30 ${x},30 ${x + 2},25`, c) + dash(x + 3, 25, 5)).join(''),
  cols((x, c) => ell(x + 7, 25, 6, 5, c) + circ(x + 1, 25, 2, W) + dash(x + 4, 25, 6)),

  cols((x, c) => poly(`${x},26 ${x + 3},20 ${x + 10},20 ${x + 13},26 ${x + 10},32 ${x + 3},32`, c) + poly(`${x + 1},24 ${x + 3},20 ${x + 10},20`, W) + dash(x + 3, 27, 7)),
  cols((x, c) => poly(`${x},21 ${x + 6.500},25 ${x + 14},21 ${x + 14},29 ${x + 7},33 ${x},29`, c) + poly(`${x + 1},20 ${x + 7},17 ${x + 13},20 ${x + 7},24`, W) + dash(x + 3, 27, 8)),
  cols((x, c) => circ(x + 7, 26, 6, c) + dash(x + 2, 25, 10) + dash(x + 4, 22, 5)),
  cols((x, c) => rect(x, 20, 13.5, 11, c) + rect(x, 20, 13.500, 2, '#555') + dash(x + 2, 26, 9)),

  cols((x, c) => rect(x, 20, 13.5, 20, c) + dash(x + 4, 22, 5)),
  cols((x, c) => circ(x + 7, 26, 6.5, W, c)),
  cols((x, c) => rect(x + 1, 20, 11, 20, W) + rect(x, 20, 1, 5, c)),
  cols((x, c) => rect(x, 18, 13.5, 3, c) + rect(x, 21, 13.5, 15, W))
];
document.getElementById('thumbs').innerHTML = shapes.map((s, i) =>
  `<svg class="thumb${i === 14 ? ' on' : ''}" width="48" height="48" viewBox="0 0 48 48">${s}</svg>`).join('');

const unit = 42.45;
let h = '', v = '', hp = '', vp = '';
for (let n = -9; n < 72; n++) {
  const major = n % 4 === 0, x = Math.round(98 + n * unit / 4) + .5, y = Math.round(24 + n * unit / 4) + .5;
  hp += `M${x} ${major ? 0 : 9}V17`;
  vp += `M${major ? 0 : 10} ${y}H17`;
  if (major) h += `<text x="${x + 2}" y="9">${n * 5}</text>`;
  if (major && n >= 0 && n <= 44) v += `<text x="${-y - 2}" y="11" text-anchor="end" transform="rotate(-90)">${n * 5}</text>`;
}
document.getElementById('hruler').innerHTML = `<path d="${hp}"/>${h}`;
document.getElementById('vruler').innerHTML = `<path d="${vp}"/>${v}`;

const colors = ('b60916 d7051d c94f78 e85060 ee7073 e85f9f e198b9 ef9089 f2919c ffa07a f0aa90 f8bfb8 ead5eb ffd0e5 ffe0e5 ' +
  '0d2250 22396f 3f2b75 004889 0068a5 3d5fac 5081c3 0080cc 0089cf 2ea7e0 00b7ef 33c7fa 8bc1ea a3d8ef cdeaf5 ' +
  '004039 005830 006063 556a2e 007846 219540 00ab9d 4fbcbb 1dc9ae 47b97d 00ae51 7fb80e a4ce5e c0d844 cde6c7 ' +
  'e1501f eb6800 f38200 f39850 f2a900 ffb300 ffb733 fccb30 ffdc00 ffef00 fcf07f ffd36f eccb96 ffdcaa fde6cf ' +
  '7a2e70 853e84 673f97 78529a 9566a0 9c5889 cc7ab0 ac92cf c6a3c8 ebc0da ' +
  '5c2b1b 763b30 954f2b a95326 c0763d b4876e deb887 d3cbc6 c9d3cb ' +
  '000000 3e3a39 595757 6f6f6f 868686 9b9f9d b1b5b4 cccfcd dddddd eeeeee ffffff').split(' ');
document.getElementById('swatches').innerHTML = colors.map(c => `<i style="background:#${c}"></i>`).join('');
```
